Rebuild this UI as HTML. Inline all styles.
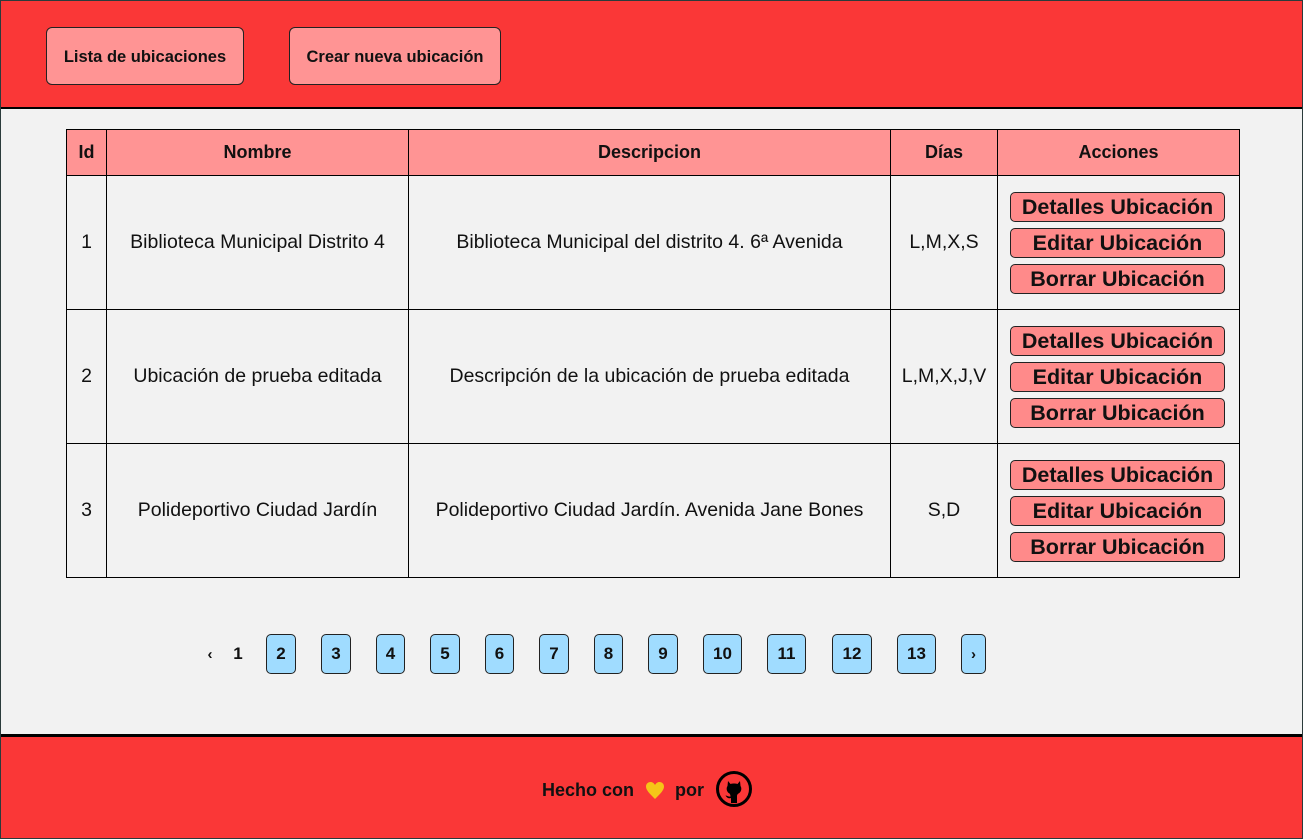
<!DOCTYPE html>
<html><head><meta charset="utf-8"><style>
*{box-sizing:border-box;margin:0;padding:0}
html,body{width:1303px;height:839px;overflow:hidden;background:#f2f2f2;font-family:"Liberation Sans",Arial,sans-serif;color:#111}
.frame{position:absolute;left:0;top:0;width:1303px;height:839px;border:1px solid #2b3b3b;pointer-events:none;z-index:5}
header{position:absolute;left:0;top:0;width:1303px;height:109px;background:#fa3737;border-bottom:2px solid #000}
.hb{position:absolute;top:27px;height:58px;padding-top:3px;background:#ff9494;border:1px solid #222;border-radius:6px;font-weight:bold;font-size:16.5px;display:flex;align-items:center;justify-content:center}
table{position:absolute;left:66px;top:129px;border-collapse:collapse;table-layout:fixed;width:1173px}
td,th{border:1px solid #000;text-align:center;font-size:19.5px}
th{background:#ff9494;height:46px;font-size:18px}
td{height:134px}
.ab{display:block;width:215px;height:30px;margin:0 auto 6px;background:#ff8a8a;border:1px solid #222;border-radius:5px;font-weight:bold;font-size:21.5px;line-height:28px;position:relative;left:-1px}
.ab:last-child{margin-bottom:0}
.pg{position:absolute;top:634px;height:40px;font-weight:bold;font-size:17px;display:flex;align-items:center;justify-content:center}
.pb{background:#a0dcff;border:1px solid #222;border-radius:5px}
footer{position:absolute;left:0;top:734px;width:1303px;height:105px;background:#fa3737;border-top:3px solid #000}
</style></head><body>
<div class="frame"></div>
<header>
<div class="hb" style="left:46px;width:198px">Lista de ubicaciones</div>
<div class="hb" style="left:289px;width:212px">Crear nueva ubicación</div>
</header>
<table>
<colgroup><col style="width:40px"><col style="width:302px"><col style="width:482px"><col style="width:107px"><col style="width:242px"></colgroup>
<tr><th>Id</th><th>Nombre</th><th>Descripcion</th><th>Días</th><th>Acciones</th></tr>
<tr><td>1</td><td>Biblioteca Municipal Distrito 4</td><td>Biblioteca Municipal del distrito 4. 6ª Avenida</td><td>L,M,X,S</td><td><span class="ab">Detalles Ubicación</span><span class="ab">Editar Ubicación</span><span class="ab">Borrar Ubicación</span></td></tr>
<tr><td>2</td><td>Ubicación de prueba editada</td><td>Descripción de la ubicación de prueba editada</td><td>L,M,X,J,V</td><td><span class="ab">Detalles Ubicación</span><span class="ab">Editar Ubicación</span><span class="ab">Borrar Ubicación</span></td></tr>
<tr><td>3</td><td>Polideportivo Ciudad Jardín</td><td>Polideportivo Ciudad Jardín. Avenida Jane Bones</td><td>S,D</td><td><span class="ab">Detalles Ubicación</span><span class="ab">Editar Ubicación</span><span class="ab">Borrar Ubicación</span></td></tr>
</table>
<div class="pg" style="left:202px;width:16px;font-size:15px">‹</div>
<div class="pg" style="left:228px;width:20px">1</div>
<div class="pg pb" style="left:266px;width:30px">2</div>
<div class="pg pb" style="left:321px;width:30px">3</div>
<div class="pg pb" style="left:376px;width:29px">4</div>
<div class="pg pb" style="left:430px;width:30px">5</div>
<div class="pg pb" style="left:485px;width:29px">6</div>
<div class="pg pb" style="left:539px;width:30px">7</div>
<div class="pg pb" style="left:594px;width:29px">8</div>
<div class="pg pb" style="left:648px;width:30px">9</div>
<div class="pg pb" style="left:703px;width:39px">10</div>
<div class="pg pb" style="left:767px;width:39px">11</div>
<div class="pg pb" style="left:832px;width:40px">12</div>
<div class="pg pb" style="left:897px;width:39px">13</div>
<div class="pg pb" style="left:961px;width:25px;font-size:15px">›</div>
<footer>
<div style="position:absolute;left:542px;top:43px;font-weight:bold;font-size:18px;line-height:20px">Hecho con</div>
<svg style="position:absolute;left:645px;top:44px" width="20" height="19" viewBox="0 0 20 19"><path d="M10 18 C4 12 1 9 1 5.5 C1 2.5 3.5 1 5.5 1 C7.5 1 9 2.3 10 4 C11 2.3 12.5 1 14.5 1 C16.5 1 19 2.5 19 5.5 C19 9 16 12 10 18Z" fill="#f5c518"/></svg>
<div style="position:absolute;left:675px;top:43px;font-weight:bold;font-size:18px;line-height:20px">por</div>
<svg style="position:absolute;left:715px;top:33px" width="38" height="38" viewBox="0 0 38 38"><circle cx="19" cy="19" r="16.5" fill="none" stroke="#000" stroke-width="3"/><path d="M13 11 L15.5 14 C17.5 13.3 20.5 13.3 22.5 14 L25 11 L25.5 16 C27 18 26.5 22 23.5 23.5 C22.5 24 22 25 22 26 L22 33 L16 33 L16 28 C13 29 11.5 27 10.5 25.5 C12 25.5 13 27 15.5 26.5 C15.5 25 15 24 14.5 23.5 C11.5 22 11 18 12.5 16Z" fill="#000"/></svg>
</footer>
</body></html>
